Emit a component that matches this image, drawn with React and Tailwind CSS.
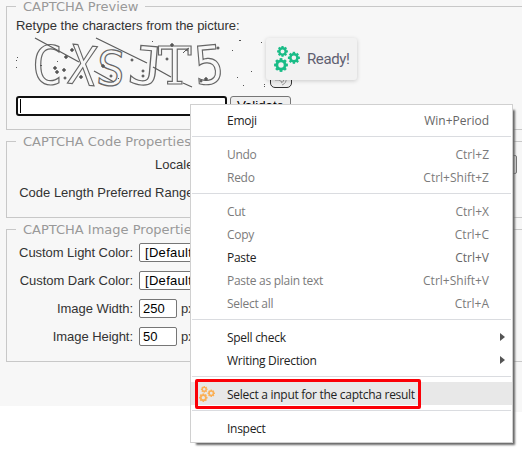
import React from "react";

const GEAR_TEETH = [0, 45, 90, 135];

function Gear({ x, y, r, hole }) {
  return (
    <g transform={`translate(${x} ${y})`}>
      <circle r={(r * 0.8 + hole) / 2} fill="none" stroke="currentColor" strokeWidth={r * 0.8 - hole} />
      {GEAR_TEETH.map((a) => (
        <g key={a} transform={`rotate(${a})`} fill="currentColor">
          <rect x={-r * 0.2} y={-r} width={r * 0.4} height={r * 0.4} />
          <rect x={-r * 0.2} y={r * 0.6} width={r * 0.4} height={r * 0.4} />
        </g>
      ))}
    </g>
  );
}

function Gears({ className }) {
  return (
    <svg viewBox="0 0 26 26" className={className}>
      <Gear x={8.5} y={5.4} r={5.4} hole={2} />
      <Gear x={19.9} y={11.8} r={6} hole={2.3} />
      <Gear x={7} y={19} r={6.9} hole={2.7} />
    </svg>
  );
}

const MONO = '"DejaVu Sans Mono", monospace';
const SERIF = '"DejaVu Serif", serif';

const GLYPHS = [
  { c: "C", x: 16, y: 47, s: 53, k: 0.97, r: 0, f: MONO },
  { c: "X", x: 51, y: 46, s: 54, k: 0.85, r: 6, f: MONO },
  { c: "S", x: 79, y: 47, s: 48, k: 1, r: 5, f: MONO },
  { c: "J", x: 111, y: 46, s: 53, k: 1.1, r: 5, f: MONO },
  { c: "T", x: 142, y: 47, s: 53, k: 0.95, r: 0, f: SERIF },
  { c: "5", x: 180, y: 48, s: 53, k: 0.92, r: -5, f: MONO },
];

const DOTS = [
  [39, 31, 4], [41, 35, 4], [48, 33, 4], [49, 41, 3], [50, 20, 4], [56, 13, 4], [65, 40, 4],
  [41, 24, 1], [87, 29, 4], [95, 39, 3], [116, 23, 3], [127, 39, 3], [127, 34, 3], [151, 22, 3],
  [156, 8, 4], [202, 11, 3], [190, 42, 4], [24, 28, 2], [136, 4, 1], [102, 41, 1], [185, 44, 3],
  [1, 20, 1], [0, 23, 1], [0, 30, 1], [223, 3, 2], [216, 13, 1], [235, 34, 1], [221, 40, 1],
  [227, 48, 1], [245, 5, 1], [248, 47, 1], [248, 49, 1],
];

function CaptchaImage() {
  return (
    <svg width="250" height="50" viewBox="0 0 250 50" className="block overflow-visible">
      <g fill="none" stroke="#666" strokeWidth="1.2">
        {GLYPHS.map((g) => (
          <text key={g.c} fontSize={g.s} fontFamily={g.f} transform={`translate(${g.x} ${g.y}) rotate(${g.r}) scale(${g.k} 1)`}>
            {g.c}
          </text>
        ))}
      </g>
      <g stroke="#5c5c5c" strokeWidth="1.3">
        <path d="M19 1L63 25M80 1L131 26M137 30L155 40M78 34L98 45M167 46L176 50" />
        <path d="M167 16l3-3l3-2M170 13l2 1" strokeWidth="1" />
      </g>
      <g fill="#555">
        {DOTS.map(([x, y, s], i) =>
          s > 2 ? (
            <path key={i} d={`M${x - s / 2} ${y}L${x} ${y - s / 2}L${x + s / 2} ${y}L${x} ${y + s / 2}Z`} stroke="#555" strokeWidth="0.4" />
          ) : (
            <rect key={i} x={x} y={y} width={s} height="1" />
          )
        )}
      </g>
    </svg>
  );
}

function Panel({ title, className, children }) {
  return (
    <section className={`ml-1.5 w-[530px] shrink-0 border border-[#c8c8c8] ${className}`}>
      <h2 className="-mt-[9px] ml-[9px] w-max bg-[#f7f7f7] px-[7px] font-['DejaVu_Sans',Verdana,sans-serif] text-[13px] leading-[17px] text-[#999]">
        {title}
      </h2>
      {children}
    </section>
  );
}

function Field({ label, children }) {
  return (
    <div className="flex h-[19px] items-center">
      <label className="w-[126px] shrink-0 whitespace-nowrap text-right tracking-[-0.05px]">{label}</label>
      <div className="ml-1.5 flex items-center">{children}</div>
    </div>
  );
}

const box = "flex h-[19px] items-center rounded-[2px] border border-[#767676] bg-white text-black";

function Item({ label, keys, off, arrow, icon, active }) {
  return (
    <div className={`flex h-[23px] shrink-0 items-center pt-[3px] ${active ? "bg-[#e8e8e8]" : ""} ${off ? "text-[#7b7b7b]" : "text-[#222]"}`}>
      <span className="flex w-9 shrink-0 justify-start pl-2">{icon}</span>
      <span className="whitespace-nowrap tracking-[-0.28px]">{label}</span>
      {keys && <span className={`ml-auto mr-[23px] ${off ? "" : "text-[#666]"}`}>{keys}</span>}
      {arrow && (
        <svg width="5" height="8" className="-mt-[3px] ml-auto mr-[7px]">
          <path d="M0 0L5 4L0 8Z" fill="#555" />
        </svg>
      )}
    </div>
  );
}

function Rule() {
  return <div className="mx-px mb-[5px] mt-[5px] h-px shrink-0 bg-[#dadce0]" />;
}

function ContextMenu() {
  return (
    <div className="absolute left-[190px] top-[104px] flex h-[339px] w-[323px] flex-col border border-[#d0d0d0] bg-white py-[3px] font-['Open_Sans',sans-serif] text-[12px] leading-[16px] shadow-[4px_4px_2px_-2px_#666]">
      <Item label="Emoji" keys="Win+Period" />
      <Rule />
      <Item label="Undo" keys="Ctrl+Z" off />
      <Item label="Redo" keys="Ctrl+Shift+Z" off />
      <Rule />
      <Item label="Cut" keys="Ctrl+X" off />
      <Item label="Copy" keys="Ctrl+C" off />
      <Item label="Paste" keys="Ctrl+V" />
      <Item label="Paste as plain text" keys="Ctrl+Shift+V" off />
      <Item label="Select all" keys="Ctrl+A" off />
      <Rule />
      <Item label="Spell check" arrow />
      <Item label="Writing Direction" arrow />
      <Rule />
      <Item label="Select a input for the captcha result" active icon={<Gears className="-mt-[3px] size-4 text-[#fbb056]" />} />
      <Rule />
      <Item label="Inspect" />
      <div className="absolute left-1 top-[274px] h-[30px] w-[226px] rounded-[2px] border-[3px] border-[#fb0007]" />
    </div>
  );
}

export default function App() {
  return (
    <main className="relative h-[451px] w-[522px] overflow-hidden bg-white font-['Liberation_Sans',Arial,sans-serif] text-[13px] leading-[16px] text-[#333]">
      <div className="flex h-[406px] flex-col bg-[#f7f7f7] pt-1.5">
        <Panel title="CAPTCHA Preview" className="h-[124px]">
          <div className="ml-[9px] mt-[3px]">
            <p className="whitespace-nowrap tracking-[-0.03px]">Retype the characters from the picture:</p>
            <div className="mt-[3px] flex h-[51px] items-end">
              <div className="self-start"><CaptchaImage /></div>
              <div className="ml-1 flex h-[22px] w-[22px] items-end justify-center rounded-[5px] border border-[#333] bg-[#eee]">
                <svg width="14" height="14" viewBox="0 0 14 14" fill="none" stroke="#999">
                  <path d="M1 7l4 0l3 2M8 12q5-2 4-7M7 10q3-1 3-4" />
                </svg>
              </div>
            </div>
            <div className="mt-2 flex">
              <div className="flex h-5 w-[211px] rounded-[3px] border-2 border-[#101010] bg-white py-px pl-0.5">
                <span className="w-px bg-black" />
              </div>
              <button className="ml-[3px] h-5 w-[61px] rounded-[3px] border border-[#767676] bg-[#efefef] text-[13.3px] text-black">Validate</button>
            </div>
          </div>
        </Panel>
        <Panel title="CAPTCHA Code Properties" className="mt-[11px] h-[77px]">
          <div className="mt-[5px] flex flex-col gap-[9px] pl-[9px]">
            <div className="flex h-[19px] items-center">
              <span className="w-[181px] text-right">Locale:</span>
              <span className="ml-[7px] h-[19px] w-[313px] rounded-[2px] border border-[#767676] bg-[#efefef]" />
            </div>
            <div className="flex h-[19px] items-center">
              <span className="w-[181px] whitespace-nowrap text-right">Code Length Preferred Range:</span>
            </div>
          </div>
        </Panel>
        <Panel title="CAPTCHA Image Properties" className="mt-[11px] h-[133px]">
          <div className="mt-[5px] flex flex-col gap-[9px]">
            <Field label="Custom Light Color:"><span className={`${box} w-[150px] pl-[5px] tracking-[0.3px]`}>[Default]</span></Field>
            <Field label="Custom Dark Color:"><span className={`${box} w-[150px] pl-[5px] tracking-[0.3px]`}>[Default]</span></Field>
            <Field label="Image Width:"><span className={`${box} w-[38px] pl-[3px]`}>250</span><span className="ml-1">px</span></Field>
            <Field label="Image Height:"><span className={`${box} w-[38px] pl-[3px]`}>50</span><span className="ml-1">px</span></Field>
          </div>
        </Panel>
      </div>
      <div className="ml-[500px] h-1.5 bg-[#f7f7f7]" />
      <div className="absolute left-[266px] top-[38px] flex h-[42px] w-[91px] items-center rounded-[3px] bg-[#f2f2f2] pl-2 shadow-[0_1px_4px_rgba(0,0,0,0.18)]">
        <Gears className="size-[26px] shrink-0 text-[#1abc87]" />
        <span className="ml-[7px] font-[Roboto,sans-serif] text-[15px] tracking-[-0.4px] text-[#5f6070]">Ready!</span>
      </div>
      <ContextMenu />
    </main>
  );
}
